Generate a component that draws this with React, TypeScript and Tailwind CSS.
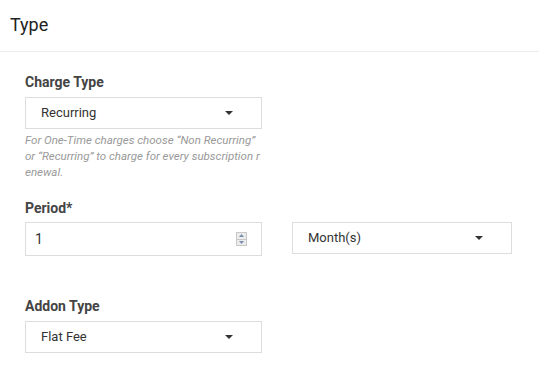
import React from "react";

function Caret() {
  return (
    <svg width="8" height="4" viewBox="0 0 8 4" className="shrink-0">
      <path d="M0 0 L8 0 L4 4 Z" fill="#333" />
    </svg>
  );
}

function Select({ value, width }: { value: string; width: string }) {
  return (
    <div className={`${width} h-[32px] border border-[#dddddd] bg-white flex items-center justify-between pl-[15px] pr-[28px] text-[13px] text-[#333]`}>
      <span>{value}</span>
      <Caret />
    </div>
  );
}

export default function App() {
  return (
    <div className="w-[539px] h-[368px] bg-white overflow-hidden" style={{ fontFamily: "Roboto, 'Liberation Sans', sans-serif" }}>
      <div className="h-[52px] border-b border-[#ececec] flex items-center pl-[10px] pb-[2px]">
        <span className="text-[18px] text-[#222]">Type</span>
      </div>
      <div className="pl-[25px] pt-[20px]">
        <div className="text-[14px] font-bold text-[#444] leading-[20px]">Charge Type</div>
        <div className="mt-[5px]">
          <Select value="Recurring" width="w-[237px]" />
        </div>
        <div className="w-[237px] mt-[3px] text-[11.5px] italic text-[#999] leading-[16px] break-all">
          For One-Time charges choose “Non Recurring” or “Recurring” to charge for every subscription renewal.
        </div>
        <div className="mt-[18px] text-[14px] font-bold text-[#444] leading-[20px]">Period*</div>
        <div className="mt-[4px] flex gap-[30px] items-start">
          <div className="w-[237px] h-[34px] border border-[#dddddd] flex items-center pl-[9px] pr-[14px] text-[14px] text-[#333]">
            <span className="flex-1">1</span>
            <div className="w-[11px] h-[14px] border border-[#c8c8c8] bg-[#ececec] flex flex-col">
              <div className="flex-1 flex items-center justify-center border-b border-[#c8c8c8]">
                <svg width="5" height="3" viewBox="0 0 5 3"><path d="M0 3 L5 3 L2.5 0 Z" fill="#7a8fb0" /></svg>
              </div>
              <div className="flex-1 flex items-center justify-center">
                <svg width="5" height="3" viewBox="0 0 5 3"><path d="M0 0 L5 0 L2.5 3 Z" fill="#7a8fb0" /></svg>
              </div>
            </div>
          </div>
          <Select value="Month(s)" width="w-[220px]" />
        </div>
        <div className="mt-[40px] text-[14px] font-bold text-[#444] leading-[20px]">Addon Type</div>
        <div className="mt-[5px]">
          <Select value="Flat Fee" width="w-[237px]" />
        </div>
      </div>
    </div>
  );
}
